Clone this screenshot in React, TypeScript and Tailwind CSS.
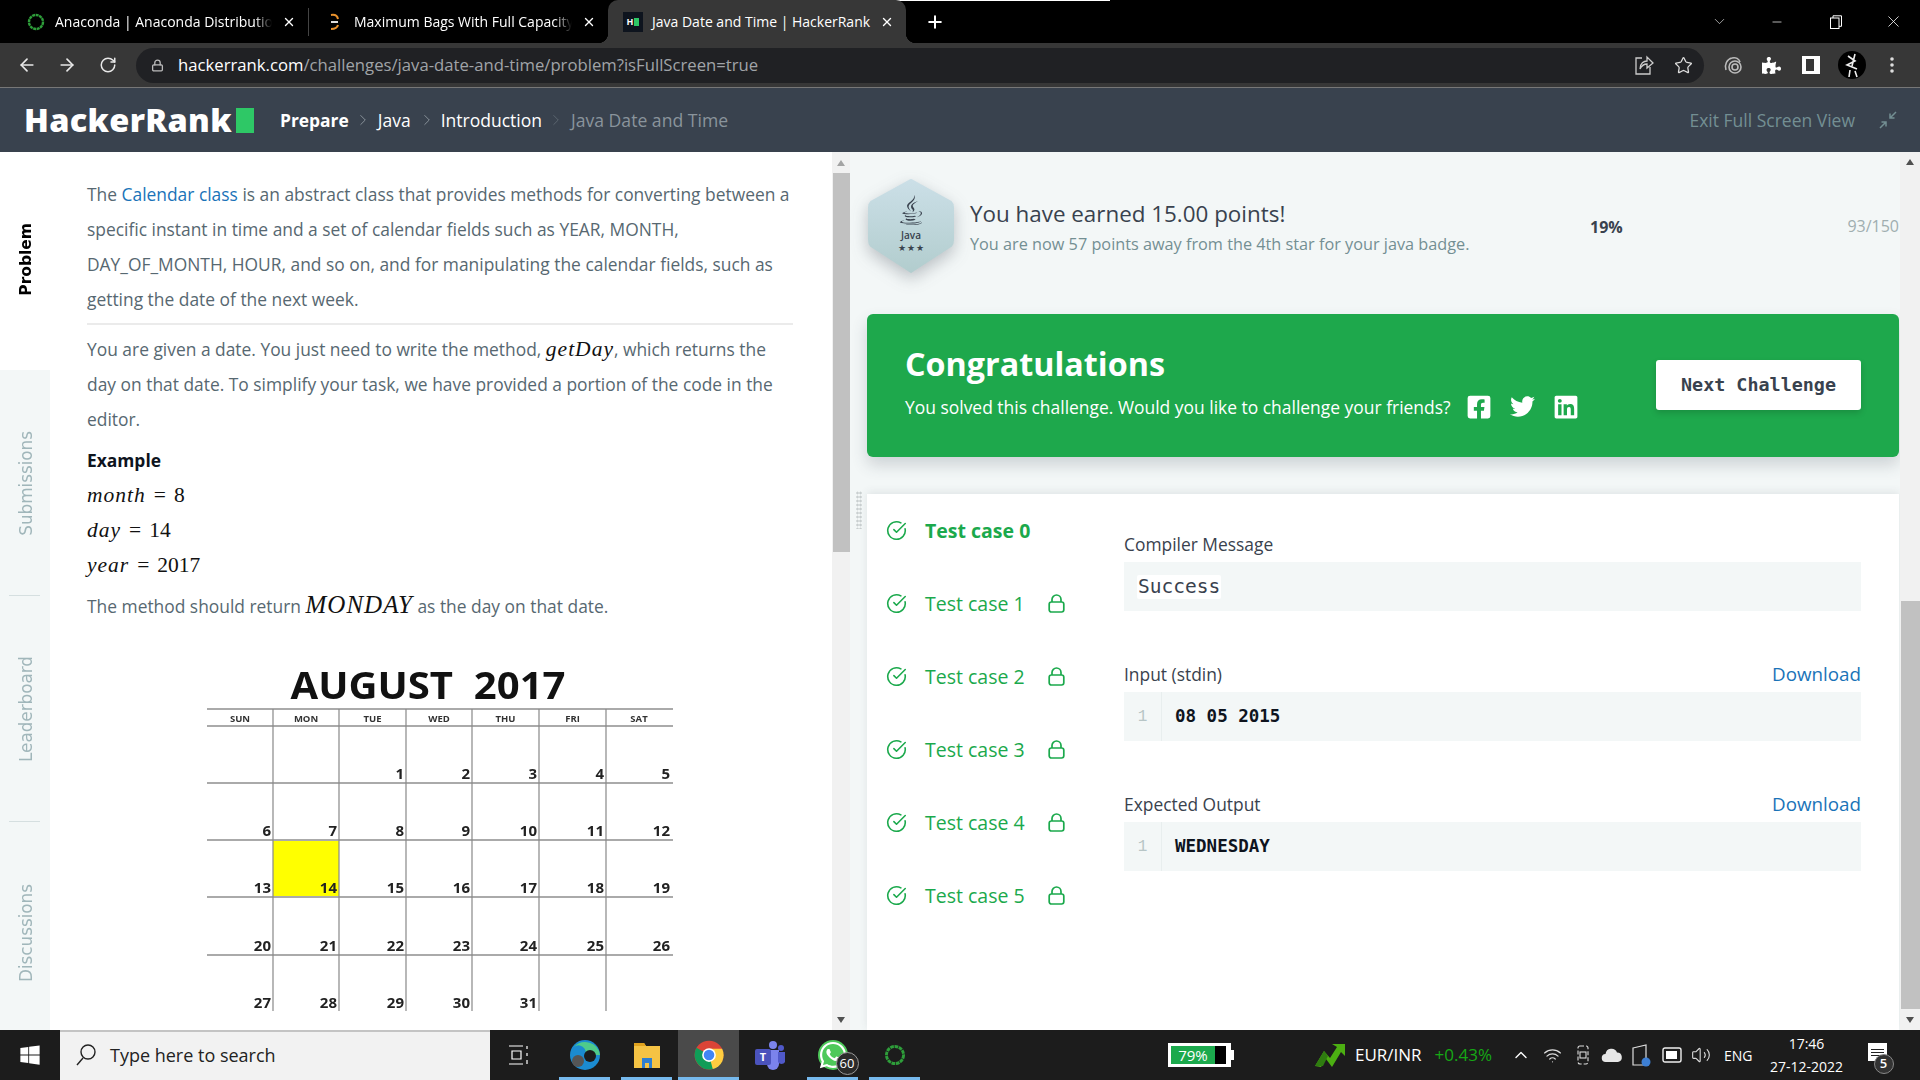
import React from "react";
import { ArrowLeft, ArrowRight, RotateCw, Lock, Star, X, Plus, ChevronRight, ChevronDown, Minus, ChevronUp, Volume2, Wifi, CircleCheckBig } from "lucide-react";
import { FaPuzzlePiece, FaFacebookSquare, FaTwitter, FaLinkedin, FaWindows, FaJava, FaWhatsapp } from "react-icons/fa";

function Ring({ size = 18 }: { size?: number }) {
  return (
    <svg width={size} height={size} viewBox="0 0 18 18" className="shrink-0">
      <circle cx="9" cy="9" r="7" fill="none" stroke="#2e9e3a" strokeWidth="2.4" strokeDasharray="3 .6" />
    </svg>
  );
}

function Tab({ icon, label, active, width, textW, pl }: { icon: React.ReactNode; label: string; active?: boolean; width: number; textW: number; pl: number }) {
  return (
    <div
      className={active ? "relative flex items-center h-[43px] rounded-t-[10px] bg-[#373737] shrink-0" : "flex items-center h-[43px] shrink-0"}
      style={{ width, paddingLeft: pl }}
    >
      {active && <div className="absolute -left-[10px] bottom-0 w-[10px] h-[10px] bg-[radial-gradient(circle_at_0_0,#000_10px,#373737_10.5px)]" />}
      {active && <div className="absolute -right-[10px] bottom-0 w-[10px] h-[10px] bg-[radial-gradient(circle_at_100%_0,#000_10px,#373737_10.5px)]" />}
      <div className="w-[20px] flex justify-center shrink-0">{icon}</div>
      <div className={active ? "ml-[9px] whitespace-nowrap text-[14px] text-white" : "ml-[9px] overflow-hidden whitespace-nowrap text-[14px] text-white [mask-image:linear-gradient(to_right,#000_92%,transparent)]"} style={{ width: textW }}>{label}</div>
      <X size={14} strokeWidth={2.4} className="ml-[10px] text-white shrink-0" />
    </div>
  );
}

function CalendarPicture() {
  const xs = [207, 273, 339, 406, 472, 539, 606, 672].map((x) => x - 207);
  const days = ["SUN", "MON", "TUE", "WED", "THU", "FRI", "SAT"];
  const rows: (number | null)[][] = [
    [null, null, 1, 2, 3, 4, 5],
    [6, 7, 8, 9, 10, 11, 12],
    [13, 14, 15, 16, 17, 18, 19],
    [20, 21, 22, 23, 24, 25, 26],
    [27, 28, 29, 30, 31, null, null],
  ];
  const base = [118, 175, 232, 290, 347];
  const lines = [48, 65, 122, 179, 236, 294];
  return (
    <svg width="466" height="350" viewBox="0 0 466 350" className="blur-[0.4px]">
      <rect x="66" y="179" width="66" height="57" fill="#ffff00" />
      <text x="221" y="38" textAnchor="middle" textLength="275" lengthAdjust="spacingAndGlyphs" fontFamily="Open Sans" fontWeight="700" fontSize="37" fill="#111">{"AUGUST\u00a0\u00a02017"}</text>
      {lines.map((y) => (<line key={y} x1="0" x2="466" y1={y} y2={y} stroke="#aaa" strokeWidth="2" />))}
      {xs.slice(1, 7).map((x) => (<line key={x} x1={x} x2={x} y1="48" y2="350" stroke="#888" strokeWidth="1.2" />))}
      {days.map((d, i) => (
        <text key={d} x={(xs[i] + xs[i + 1]) / 2} y="61" textAnchor="middle" fontFamily="Open Sans" fontWeight="700" fontSize="9.5" fill="#333">{d}</text>
      ))}
      {rows.map((r, ri) => r.map((n, ci) => n === null ? null : (
        <text key={n} x={xs[ci + 1] - 2} y={base[ri]} textAnchor="end" fontFamily="Open Sans" fontWeight="700" fontSize="15" fill="#222">{n}</text>
      )))}
    </svg>
  );
}

function SideTab({ label, active, h, divider, pt = 0, pb = 0 }: { label: string; active?: boolean; h: number; divider?: boolean; pt?: number; pb?: number }) {
  return (
    <div className={active ? "relative flex items-center justify-center pl-[3px] bg-white shrink-0" : "relative flex items-center justify-center pl-[3px] shrink-0"} style={{ height: h, paddingTop: pt, paddingBottom: pb }}>
      <div className={active ? "[writing-mode:vertical-rl] rotate-180 font-['DejaVu_Sans',sans-serif] font-bold text-[15.5px] text-black" : "[writing-mode:vertical-rl] rotate-180 font-['DejaVu_Sans',sans-serif] text-[16.8px] text-[#a0b6ba]"}>{label}</div>
      {divider && <div className="absolute bottom-0 left-[9px] w-[31px] h-px bg-[#d5dfe0]" />}
    </div>
  );
}

function M({ children }: { children: React.ReactNode }) {
  return <span className="font-['Liberation_Serif',serif] italic text-[21.5px] tracking-[1px] text-[#111]">{children}</span>;
}
function Eq({ name, value }: { name: string; value: string }) {
  return (
    <p className="font-['Liberation_Serif',serif] text-[21.5px] text-[#111]">
      <M>{name}</M><span className="mx-[8px]">=</span>{value}
    </p>
  );
}

function LockIcon() {
  return (
    <svg width="17" height="19" viewBox="0 0 17 19" fill="none" stroke="#1ba94c" strokeWidth="1.7" className="shrink-0">
      <path d="M4 8V5.5a4.5 4.5 0 0 1 9 0V8" />
      <rect x="1.2" y="8" width="14.6" height="10" rx="2.2" />
    </svg>
  );
}

function TestRow({ n, first }: { n: number; first?: boolean }) {
  return (
    <div className="flex items-center h-[73px]">
      <CircleCheckBig size={21} strokeWidth={1.8} className="text-[#1ba94c] shrink-0" />
      <div className={first ? "ml-[18px] w-[123px] text-[19.5px] font-bold text-[#1ba94c] whitespace-nowrap" : "ml-[18px] w-[123px] text-[19.5px] text-[#1ba94c] whitespace-nowrap"}>Test case {n}</div>
      {!first && <LockIcon />}
    </div>
  );
}

function CodeBlock({ title, value }: { title: string; value: string }) {
  return (
    <div className="mt-[52px]">
      <div className="flex justify-between items-center h-[24px] pb-[2px]">
        <span className="text-[17.4px] text-[#39424e]">{title}</span>
        <span className="text-[18.8px] text-[#1a73b8]">Download</span>
      </div>
      <div className="mt-[5px] h-[49px] bg-[#f3f7f7] flex items-center">
        <div className="w-[38px] h-full flex items-center justify-center border-r border-[#e8eeee] text-[16px] text-[#b7c5c6] font-['Liberation_Mono',monospace]">1</div>
        <div className="ml-[13px] font-['DejaVu_Sans_Mono',monospace] font-bold text-[17.5px] text-[#0e141e]">{value}</div>
      </div>
    </div>
  );
}

function ChromeLogo() {
  return (
    <svg width="30" height="30" viewBox="0 0 48 48">
      <circle cx="24" cy="24" r="23" fill="#db4437" />
      <path d="M24 24 L44 35.5 A23 23 0 0 1 12 44 Z" fill="#0f9d58" />
      <path d="M4 12.5 A23 23 0 0 0 13 44 L24 24 Z" fill="#0f9d58" />
      <path d="M24 14 H45 A23 23 0 0 1 30 46.5 L24 24 Z" fill="#ffcd40" />
      <circle cx="24" cy="24" r="11" fill="#fff" />
      <circle cx="24" cy="24" r="8.5" fill="#4285f4" />
    </svg>
  );
}

function TaskSlot({ w, active, on, pr = 0, children }: { w: number; active?: boolean; on?: boolean; pr?: number; children: React.ReactNode }) {
  return (
    <div className={active ? "relative h-full flex items-center justify-center bg-[#4a4a4a] shrink-0" : "relative h-full flex items-center justify-center shrink-0"} style={{ width: w, paddingRight: pr }}>
      {children}
      {on && <div className="absolute bottom-0 inset-x-0 h-[3px] bg-[#76b9ed]" />}
    </div>
  );
}

function Tray() {
  return (
    <div className="flex items-center h-full text-white">
      <div className="flex items-center w-[63px] h-[24px] bg-white p-[3px] pr-[5px] relative">
        <div className="h-full w-[44px] bg-[#1ba94c] flex items-center justify-center text-[15px] text-white">79%</div>
        <div className="h-full w-[11px] bg-black" />
        <div className="absolute -right-[3px] top-[7px] w-[3px] h-[10px] bg-white" />
      </div>
      <svg width="30" height="26" viewBox="0 0 30 26" className="ml-[84px]">
        <path d="M0 24 L9 9 L15 16 L22 5 L17 2 H30 V14 L26 10 L17 25 L11 17 L6 25 Z" fill="#4caf12" />
        <path d="M0 24 L9 9 L13 14 L8 24 Z" fill="#2f7d10" />
      </svg>
      <span className="ml-[10px] text-[17px]">EUR/INR</span>
      <span className="ml-[13px] text-[17px] text-[#16a815]">+0.43%</span>
      <ChevronUp size={20} strokeWidth={1.6} className="ml-[19px]" />
      <Wifi size={19} strokeWidth={1.5} className="ml-[12px] text-[#ddd]" />
      <svg width="14" height="20" viewBox="0 0 14 20" fill="none" stroke="#ddd" strokeWidth="1.1" className="ml-[14px]">
        <rect x="2" y="1" width="10" height="18" rx="2" strokeDasharray="4 2" /><rect x="4" y="7" width="6" height="6" />
      </svg>
      <svg width="22" height="16" viewBox="0 0 22 16" className="ml-[11px]">
        <path d="M5 15a4 4 0 0 1-.5-8A6 6 0 0 1 16 5.5 4.8 4.8 0 0 1 17 15Z" fill="#e6e6e6" />
      </svg>
      <svg width="20" height="24" viewBox="0 0 20 24" className="ml-[9px]">
        <path d="M1 5 L14 2 V22 H1 Z" fill="none" stroke="#ddd" strokeWidth="1.2" />
        <circle cx="14" cy="19" r="4.5" fill="#3d7fd4" />
      </svg>
      <svg width="20" height="16" viewBox="0 0 20 16" className="ml-[10px]">
        <rect x="1" y="1" width="18" height="14" rx="2" fill="none" stroke="#eee" strokeWidth="1.4" /><rect x="4" y="4" width="11" height="8" fill="#fff" />
      </svg>
      <Volume2 size={20} strokeWidth={1.3} className="ml-[9px] text-[#ddd]" />
      <span className="ml-[13px] text-[14px]">ENG</span>
      <div className="ml-[14px] w-[80px] flex flex-col items-center whitespace-nowrap text-[14px] leading-[23px]"><span>17:46</span><span>27-12-2022</span></div>
      <div className="relative ml-[21px] w-[20px] h-[24px]">
        <div className="w-[19px] h-[18px] bg-white flex flex-col justify-center gap-[2px] px-[3px]">
          <div className="h-px bg-[#222]" /><div className="h-px bg-[#222]" /><div className="h-px bg-[#222]" />
        </div>
        <div className="absolute -right-[6px] top-[11px] w-[20px] h-[20px] rounded-full bg-[#333] border border-[#888] flex items-center justify-center text-[13px] font-semibold">5</div>
      </div>
    </div>
  );
}

export default function App() {
  return (
    <div className="w-[1920px] h-[1080px] overflow-hidden flex flex-col font-['Open_Sans',sans-serif] bg-white">
      {/* Tab strip */}
      <div className="relative h-[43px] bg-black flex items-center shrink-0">
        <div className="absolute top-0 left-[808px] w-[62px] h-[1px] bg-[#0078d7]" />
        <div className="absolute top-0 left-[870px] w-[240px] h-[1px] bg-white" />
        <Tab pl={26} width={309} textW={217} icon={<Ring />} label="Anaconda | Anaconda Distribution" />
        <div className="w-px h-[28px] bg-[#444] -ml-px" />
        <Tab pl={16} width={299} textW={218} icon={
          <svg width="12" height="20" viewBox="0 0 12 20"><path d="M2 3 Q8 2 9 7" fill="none" stroke="#e8912c" strokeWidth="2" /><path d="M2 10 H9" stroke="#ddd" strokeWidth="2" /><path d="M9 13 Q8 17 2 17" fill="none" stroke="#e8912c" strokeWidth="2" /></svg>
        } label="Maximum Bags With Full Capacity of Rocks" />
        <Tab active pl={15} width={298} textW={218} icon={
          <div className="w-[20px] h-[20px] bg-[#0e141e] flex items-center justify-center gap-px">
            <span className="text-[9px] font-bold text-white leading-none">H</span><div className="w-[5px] h-[8px] bg-[#2ec866]" />
          </div>
        } label="Java Date and Time | HackerRank" />
        <Plus size={20} strokeWidth={2.4} className="ml-[19px] text-white" />
        <ChevronDown size={17} strokeWidth={1} className="ml-[766px] text-[#ddd]" />
        <Minus size={14} strokeWidth={1.2} className="ml-[42px] text-white" />
        <svg width="14" height="14" viewBox="0 0 14 14" fill="none" stroke="#fff" strokeWidth="1" className="ml-[45px]"><rect x="1.5" y="3" width="8.5" height="10.5" /><path d="M4 3V.8h8.5v10.5H10" /></svg>
        <X size={19} strokeWidth={1} className="ml-[41px] text-white" />
      </div>
      {/* Toolbar */}
      <div className="h-[45px] bg-[#373737] border-b border-[#777] flex items-center shrink-0">
        <ArrowLeft size={20} strokeWidth={2} className="ml-[17px] text-[#e8e8e8]" />
        <ArrowRight size={20} strokeWidth={2} className="ml-[20px] text-[#e8e8e8]" />
        <RotateCw size={18} strokeWidth={2} className="ml-[22px] text-[#e8e8e8]" />
        <div className="ml-[19px] w-[1568px] h-[35px] rounded-full bg-[#202124] flex items-center">
          <Lock size={13} strokeWidth={2.4} className="ml-[15px] text-[#bbb]" />
          <div className="ml-[14px] text-[16.7px] whitespace-nowrap text-[#a0a4a8]"><span className="text-white">hackerrank.com</span>/challenges/java-date-and-time/problem?isFullScreen=true</div>
          <svg width="20" height="22" viewBox="0 0 20 22" fill="none" stroke="#ccc" strokeWidth="1.3" className="ml-auto">
            <path d="M8 4 H2 V20 H16 V13" /><path d="M6 15 C6 9 10 7 13 7 V3 L19 9 L13 14 V10 C10 10 8 11 6 15Z" />
          </svg>
          <Star size={19} strokeWidth={1.6} className="ml-[20px] mr-[11px] text-[#ddd]" />
        </div>
        <svg width="20" height="20" viewBox="0 0 20 20" fill="none" stroke="#bbb" strokeWidth="1.6" className="ml-[19px]">
          <circle cx="12" cy="12" r="6" /><circle cx="12" cy="12" r="3" /><path d="M3 15 C1 10 4 4 9 3 C13 2 16 4 17 7" />
        </svg>
        <FaPuzzlePiece size={19} className="ml-[19px] text-white" />
        <svg width="20" height="20" viewBox="0 0 20 20" className="ml-[20px]"><path d="M1 1h18v18H1Z M5 4v12h8V4Z" fill="#fff" fillRule="evenodd" /></svg>
        <div className="ml-[17px] w-[28px] h-[28px] rounded-full bg-black flex items-center justify-center overflow-hidden">
          <svg width="24" height="26" viewBox="0 0 24 26" fill="none" stroke="#eee" strokeWidth="1.6"><path d="M8 4 L15 9 L7 13 L17 17 M15 2 L12 14 M10 18 L9 25 M15 19 L17 25" /></svg>
        </div>
        <svg width="4" height="16" viewBox="0 0 4 16" className="ml-[24px]" fill="#ddd"><circle cx="2" cy="2" r="1.8" /><circle cx="2" cy="8" r="1.8" /><circle cx="2" cy="14" r="1.8" /></svg>
      </div>
      {/* HackerRank nav */}
      <div className="h-[64px] bg-[#39424e] flex items-center shrink-0">
        <div className="ml-[24px] w-[212px] text-[32.5px] leading-none font-extrabold text-white tracking-[0.3px] whitespace-nowrap">HackerRank</div>
        <div className="w-[18px] h-[25px] bg-[#2ec866]" />
        <span className="ml-[26px] text-[17.4px] font-bold text-white">Prepare</span>
        <ChevronRight size={18} strokeWidth={1} className="ml-[5px] text-[#a0aab0]" />
        <span className="ml-[6px] text-[17.5px] text-white">Java</span>
        <ChevronRight size={18} strokeWidth={1} className="ml-[7px] text-[#a0aab0]" />
        <span className="ml-[5px] text-[17.5px] text-white">Introduction</span>
        <ChevronRight size={18} strokeWidth={1} className="ml-[5px] text-[#667079]" />
        <span className="ml-[6px] text-[17.6px] text-[#8a949c]">Java Date and Time</span>
        <span className="ml-auto text-[17.5px] text-[#738f93]">Exit Full Screen View</span>
        <svg width="18" height="18" viewBox="0 0 18 18" fill="none" stroke="#738f93" strokeWidth="1.5" className="ml-[24px] mr-[23px]">
          <path d="M17 1 L11 7 M11 2.5 V7 H15.5 M1 17 L7 11 M2.5 11 H7 V15.5" />
        </svg>
      </div>
      {/* Body */}
      <div className="flex-1 min-h-0 flex bg-[#f3f7f7]">
        {/* Side tabs */}
        <div className="w-[50px] shrink-0 flex flex-col">
          <SideTab active label="Problem" h={218} pb={4} />
          <SideTab label="Submissions" h={226} divider />
          <SideTab label="Leaderboard" h={226} divider />
          <SideTab label="Discussions" h={208} pt={14} />
        </div>
        {/* Problem */}
        <div className="w-[782px] shrink-0 bg-white pl-[37px] pr-[39px] pt-[25px] text-[17.4px] leading-[35px] text-[#576871] overflow-hidden">
          <p>The <span className="text-[#1a73b8]">Calendar class</span> is an abstract class that provides methods for converting between a specific instant in time and a set of calendar fields such as YEAR, MONTH, DAY_OF_MONTH, HOUR, and so on, and for manipulating the calendar fields, such as getting the date of the next week.</p>
          <div className="mt-[6px] h-[2px] bg-[#ebebeb]" />
          <p className="mt-[7px]">You are given a date. You just need to write the method, <M>getDay</M>, which returns the day on that date. To simplify your task, we have provided a portion of the code in the editor.</p>
          <p className="mt-[6px] font-bold text-[#0e141e]">Example</p>
          <Eq name="month" value="8" />
          <Eq name="day" value="14" />
          <Eq name="year" value="2017" />
          <p className="mt-[4px]">The method should return <span className="font-['Liberation_Serif',serif] italic text-[25px] tracking-[1px] text-[#111]">MONDAY</span> as the day on that date.</p>
          <div className="mt-[37px] ml-[120px]"><CalendarPicture /></div>
        </div>
        {/* Left scrollbar */}
        <div className="w-[18px] shrink-0 bg-[#f1f1f1] flex flex-col items-center">
          <div className="h-[21px] flex items-center justify-center"><div className="w-0 h-0 border-x-[4.5px] border-x-transparent border-b-[6px] border-b-[#a3a3a3]" /></div>
          <div className="w-[17px] h-[379px] bg-[#c1c1c1]" />
          <div className="mt-auto h-[21px] flex items-center justify-center"><div className="w-0 h-0 border-x-[4.5px] border-x-transparent border-t-[6px] border-t-[#505050]" /></div>
        </div>
        {/* Splitter */}
        <div className="w-[17px] shrink-0 flex items-center justify-center pb-[287px] pt-[124px] -mb-px">
          <div className="w-[6px] h-[38px] bg-[radial-gradient(#c9cfd0_1px,transparent_1.2px)] bg-[length:3px_4px]" />
        </div>
        {/* Result */}
        <div className="flex-1 min-w-0 text-[#39424e] pr-px">
          <div className="flex mt-[26px] h-[96px]">
            <div className="relative w-[88px] h-[96px] shrink-0 flex flex-col items-center">
              <svg width="96" height="112" viewBox="0 0 96 112" className="absolute -left-[4px] -top-[4px] drop-shadow-[0_6px_8px_rgba(57,66,78,0.3)]">
                <defs><linearGradient id="hex" x1="0" y1="0" x2="0" y2="1"><stop offset="0" stopColor="#cbdfe7" /><stop offset="1" stopColor="#b2cdce" /></linearGradient></defs>
                <path d="M48 6 L88 28 Q90 30 90 33 V66 Q90 70 88 72 L48 98 L8 72 Q6 70 6 66 V33 Q6 30 8 28 Z" fill="url(#hex)" stroke="url(#hex)" strokeLinejoin="round" strokeWidth="2" />
              </svg>
              <FaJava size={30} className="relative mt-[17px] text-[#39424e]" />
              <span className="relative text-[10px] leading-[14px] mt-[3px] font-semibold text-[#39424e]">Java</span>
              <span className="relative text-[9px] leading-[12px] tracking-[1px] text-[#39424e]">★★★</span>
            </div>
            <div className="ml-[15px] w-[620px] pt-[21px]">
              <div className="text-[22.4px] leading-[30px] text-[#39424e]">You have earned 15.00 points!</div>
              <div className="text-[16.25px] leading-[30px] text-[#738f93]">You are now 57 points away from the 4th star for your java badge.</div>
            </div>
            <div className="pt-px text-[16px] font-bold leading-[96px]">19%</div>
            <div className="ml-auto text-[16px] leading-[96px] text-[#a0aeb0]">93/150</div>
          </div>
          <div className="mt-[40px] h-[143px] bg-[#1ea84c] rounded-[6px] shadow-[0_8px_16px_rgba(57,66,78,0.2)] flex items-center justify-between pl-[38px] pr-[38px] text-white">
            <div className="pb-[9px]">
              <div className="text-[32.3px] leading-[40px] font-bold">Congratulations</div>
              <div className="mt-[13px] flex items-center h-[24px] text-[17.45px]">
                <span className="whitespace-nowrap">You solved this challenge. Would you like to challenge your friends?</span>
                <FaFacebookSquare size={26} className="ml-[15px] -mt-[2px]" />
                <FaTwitter size={25} className="ml-[18px] -mt-[2px]" />
                <FaLinkedin size={26} className="ml-[18px] -mt-[2px]" />
              </div>
            </div>
            <div className="mb-[2px] w-[205px] h-[50px] bg-white rounded-[3px] shadow-[0_3px_6px_rgba(0,0,0,0.15)] flex items-center justify-center font-['DejaVu_Sans_Mono',monospace] font-bold text-[18.4px] text-[#39424e]">Next Challenge</div>
          </div>
          <div className="mt-[37px] h-[536px] bg-white shadow-[0_-2px_8px_rgba(57,66,78,0.1)] flex pl-[19px] pr-[38px]">
            <div className="w-[238px] shrink-0">
              {[0, 1, 2, 3, 4, 5].map((n) => <TestRow key={n} n={n} first={n === 0} />)}
            </div>
            <div className="flex-1 min-w-0 pt-[38px]">
              <div className="h-[24px] leading-[24px] text-[17.4px]">Compiler Message</div>
              <div className="mt-[6px] h-[49px] bg-[#f3f7f7] flex items-center pl-[13px]">
                <span className="bg-white rounded-[2px] px-px h-[24px] leading-[24px] font-['DejaVu_Sans_Mono',monospace] text-[19.5px] text-[#39424e]">Success</span>
              </div>
              <CodeBlock title="Input (stdin)" value="08 05 2015" />
              <CodeBlock title="Expected Output" value="WEDNESDAY" />
            </div>
          </div>
        </div>
        {/* Right scrollbar */}
        <div className="w-[20px] shrink-0 bg-[#f1f1f1] flex flex-col items-center">
          <div className="h-[21px] flex items-center justify-center"><div className="w-0 h-0 border-x-[4.5px] border-x-transparent border-b-[6px] border-b-[#505050]" /></div>
          <div className="mt-[428px] w-[19px] h-[409px] bg-[#c1c1c1]" />
          <div className="mt-auto h-[21px] flex items-center justify-center"><div className="w-0 h-0 border-x-[4.5px] border-x-transparent border-t-[6px] border-t-[#505050]" /></div>
        </div>
      </div>
      {/* Taskbar */}
      <div className="h-[50px] bg-[#1c1c1c] flex items-center shrink-0 text-white">
        <div className="w-[60px] flex justify-center"><FaWindows size={22} /></div>
        <div className="w-[430px] h-full bg-[#f2f2f2] border-t-2 border-[#c4c4c4] pb-[2px] flex items-center text-[#222]">
          <svg width="22" height="24" viewBox="0 0 22 24" fill="none" stroke="#222" strokeWidth="1.4" className="ml-[15px]"><circle cx="13" cy="9" r="7" /><path d="M8 15 L2 22" /></svg>
          <span className="ml-[13px] text-[18px]">Type here to search</span>
        </div>
        <div className="w-[69px] flex justify-center pr-[11px]">
          <svg width="20" height="24" viewBox="0 0 20 24" fill="none" stroke="#fff" strokeWidth="1.2"><path d="M0 3h14M0 21h14M3 8h9v8H3ZM18 3v3M18 10v3M18 17v4" /></svg>
        </div>
        <TaskSlot w={51} on>
          <svg width="32" height="32" viewBox="0 0 32 32"><circle cx="16" cy="16" r="15" fill="#1b8bd0" /><path d="M5 8 A15 15 0 0 1 31 16 H16 A7 7 0 0 0 5 8Z" fill="#4ecb8a" /><circle cx="9" cy="22" r="6" fill="#555" /><circle cx="21" cy="17" r="6" fill="#1c1c1c" /></svg>
        </TaskSlot>
        <div className="w-[11px]" />
        <TaskSlot w={51} on>
          <svg width="28" height="30" viewBox="0 0 28 30"><path d="M1 3h10l2 3h14v22H1Z" fill="#f5c344" /><path d="M1 3h10l2 3H1Z" fill="#e0a21e" /><path d="M9 18h10v10h-3v-5h-4v5H9Z" fill="#2f7fd0" /></svg>
        </TaskSlot>
        <div className="w-[6px]" />
        <TaskSlot w={61} active on><ChromeLogo /></TaskSlot>
        <TaskSlot w={68} pr={6}>
          <svg width="32" height="30" viewBox="0 0 32 30"><circle cx="19" cy="5" r="4" fill="#7b83eb" /><circle cx="27" cy="8" r="3" fill="#5059c9" /><path d="M13 10h12v14a6 6 0 0 1-12 0Z" fill="#7b83eb" /><path d="M24 12h7v10a4 4 0 0 1-7 0Z" fill="#5059c9" /><rect x="1" y="9" width="16" height="16" rx="2" fill="#4b53bc" /><text x="9" y="21" textAnchor="middle" fontSize="11" fontWeight="700" fill="#fff" fontFamily="Open Sans">T</text></svg>
        </TaskSlot>
        <TaskSlot w={51} on>
          <div className="relative">
            <div className="w-[30px] h-[30px] rounded-full bg-[#4ec95a] flex items-center justify-center"><FaWhatsapp size={30} className="text-white" /></div>
            <div className="absolute -right-[11px] -bottom-[5px] w-[23px] h-[23px] rounded-full bg-[#2a2a2a] border border-[#999] flex items-center justify-center text-[13px]">60</div>
          </div>
        </TaskSlot>
        <div className="w-[11px]" />
        <TaskSlot w={51} on><Ring size={22} /></TaskSlot>
        <div className="w-[248px]" />
        <Tray />
      </div>
    </div>
  );
}
